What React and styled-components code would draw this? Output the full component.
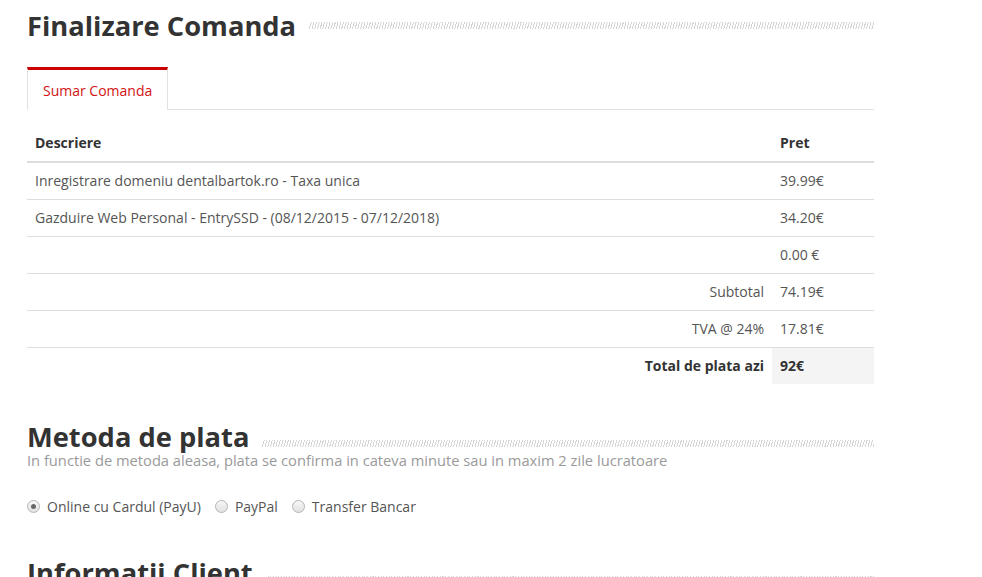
import React from 'react';
import styled, { createGlobalStyle } from 'styled-components';

const GlobalStyle = createGlobalStyle`
  body {
    margin: 0;
    background: #fff;
    font-family: 'Open Sans', 'Liberation Sans', sans-serif;
    color: #555;
  }
`;

const Page = styled.div`
  width: 847px;
  padding: 8px 0 0 27px;
`;

const SectionHead = styled.div`
  display: flex;
  align-items: center;
  margin-top: ${(p) => p.$top || 0}px;
`;

const Title = styled.h2`
  margin: 0;
  font-size: 27.3px;
  line-height: 36px;
  font-weight: 700;
  color: #333;
  white-space: nowrap;
`;

const Stripes = styled.div`
  flex: 1;
  height: 7px;
  margin-left: 13px;
  margin-top: ${(p) => p.$offset || 0}px;
  background: repeating-linear-gradient(
    105deg,
    #fff 0 1.6px,
    #d6d6d6 1.6px 2.6px
  );
`;

const Tabs = styled.div`
  display: flex;
  margin-top: 23px;
  border-bottom: 1px solid #e2e2e2;
`;

const Tab = styled.div`
  height: 40px;
  padding: 0 15px;
  display: flex;
  align-items: center;
  border-top: 3px solid #cc0000;
  border-left: 1px solid #e2e2e2;
  border-right: 1px solid #e2e2e2;
  margin-bottom: -1px;
  background: #fff;
  color: #d11414;
  font-size: 14px;
`;

const Table = styled.table`
  width: 100%;
  margin-top: 15px;
  border-collapse: collapse;
  font-size: 14px;
  color: #555;
`;

const Th = styled.th`
  text-align: left;
  font-weight: 700;
  color: #333;
  padding: 8px;
  line-height: 20px;
  border-bottom: 2px solid #ddd;
  width: ${(p) => p.$w || 'auto'};
`;

const Td = styled.td`
  padding: 8px;
  line-height: 20px;
  border-top: 1px solid #ddd;
  text-align: ${(p) => (p.$right ? 'right' : 'left')};
  font-weight: ${(p) => (p.$bold ? 700 : 400)};
  color: ${(p) => (p.$bold ? '#333' : '#555')};
  background: ${(p) => (p.$shade ? '#f4f4f4' : 'transparent')};
`;

const BodyRow = styled.tr`
  &:first-child td {
    border-top: none;
  }
`;

const Subtitle = styled.p`
  margin: -5px 0 0;
  font-size: 14.7px;
  line-height: 20px;
  color: #9a9a9a;
`;

const Methods = styled.div`
  display: flex;
  align-items: center;
  gap: 14px;
  margin-top: 27px;
  font-size: 14px;
  color: #555;
`;

const Method = styled.label`
  display: flex;
  align-items: center;
  gap: 7px;
`;

const Radio = styled.span`
  width: 11px;
  height: 11px;
  border-radius: 50%;
  border: 1px solid #b5b5b5;
  background: linear-gradient(#f6f6f6, #e2e2e2);
  display: flex;
  align-items: center;
  justify-content: center;

  &::after {
    content: '';
    width: 5px;
    height: 5px;
    border-radius: 50%;
    background: ${(p) => (p.$on ? '#666' : 'transparent')};
  }
`;

const rows = [
  ['Inregistrare domeniu dentalbartok.ro - Taxa unica', '39.99€'],
  ['Gazduire Web Personal - EntrySSD - (08/12/2015 - 07/12/2018)', '34.20€'],
  ['', '0.00 €'],
];

const totals = [
  ['Subtotal', '74.19€'],
  ['TVA @ 24%', '17.81€'],
];

const App = () => {
  return (
    <Page>
      <GlobalStyle />
      <SectionHead>
        <Title>Finalizare Comanda</Title>
        <Stripes $offset={-1} />
      </SectionHead>

      <Tabs>
        <Tab>Sumar Comanda</Tab>
      </Tabs>

      <Table>
        <thead>
          <tr>
            <Th>Descriere</Th>
            <Th $w='86px'>Pret</Th>
          </tr>
        </thead>
        <tbody>
          {rows.map(([desc, price], i) => (
            <BodyRow key={i}>
              <Td>{desc}</Td>
              <Td>{price}</Td>
            </BodyRow>
          ))}
          {totals.map(([label, value]) => (
            <BodyRow key={label}>
              <Td $right>{label}</Td>
              <Td>{value}</Td>
            </BodyRow>
          ))}
          <BodyRow>
            <Td $right $bold>
              Total de plata azi
            </Td>
            <Td $bold $shade>
              92€
            </Td>
          </BodyRow>
        </tbody>
      </Table>

      <SectionHead $top={35}>
        <Title>Metoda de plata</Title>
        <Stripes $offset={12} />
      </SectionHead>
      <Subtitle>
        In functie de metoda aleasa, plata se confirma in cateva minute sau in
        maxim 2 zile lucratoare
      </Subtitle>

      <Methods>
        <Method>
          <Radio $on />
          Online cu Cardul (PayU)
        </Method>
        <Method>
          <Radio />
          PayPal
        </Method>
        <Method>
          <Radio />
          Transfer Bancar
        </Method>
      </Methods>

      <SectionHead $top={39}>
        <Title>Informatii Client</Title>
        <Stripes $offset={12} />
      </SectionHead>
    </Page>
  );
};

export default App;
